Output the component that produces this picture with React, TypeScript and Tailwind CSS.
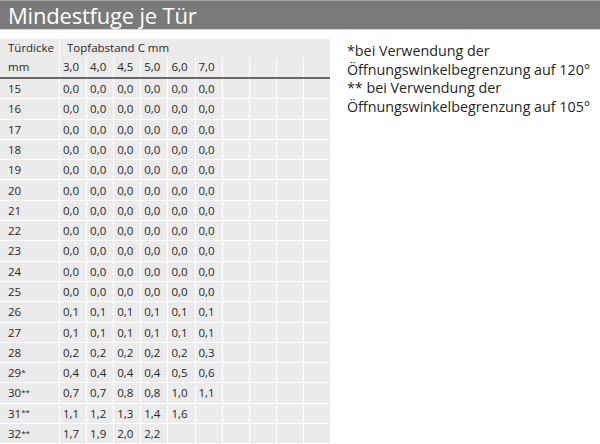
const cols = ["3,0", "4,0", "4,5", "5,0", "6,0", "7,0", "", "", "", ""];

const rows: [string, string[]][] = [
  ["15", ["0,0", "0,0", "0,0", "0,0", "0,0", "0,0"]],
  ["16", ["0,0", "0,0", "0,0", "0,0", "0,0", "0,0"]],
  ["17", ["0,0", "0,0", "0,0", "0,0", "0,0", "0,0"]],
  ["18", ["0,0", "0,0", "0,0", "0,0", "0,0", "0,0"]],
  ["19", ["0,0", "0,0", "0,0", "0,0", "0,0", "0,0"]],
  ["20", ["0,0", "0,0", "0,0", "0,0", "0,0", "0,0"]],
  ["21", ["0,0", "0,0", "0,0", "0,0", "0,0", "0,0"]],
  ["22", ["0,0", "0,0", "0,0", "0,0", "0,0", "0,0"]],
  ["23", ["0,0", "0,0", "0,0", "0,0", "0,0", "0,0"]],
  ["24", ["0,0", "0,0", "0,0", "0,0", "0,0", "0,0"]],
  ["25", ["0,0", "0,0", "0,0", "0,0", "0,0", "0,0"]],
  ["26", ["0,1", "0,1", "0,1", "0,1", "0,1", "0,1"]],
  ["27", ["0,1", "0,1", "0,1", "0,1", "0,1", "0,1"]],
  ["28", ["0,2", "0,2", "0,2", "0,2", "0,2", "0,3"]],
  ["29*", ["0,4", "0,4", "0,4", "0,4", "0,5", "0,6"]],
  ["30**", ["0,7", "0,7", "0,8", "0,8", "1,0", "1,1"]],
  ["31**", ["1,1", "1,2", "1,3", "1,4", "1,6"]],
  ["32**", ["1,7", "1,9", "2,0", "2,2"]],
];

const cell = "bg-[#ebebeb] flex items-center";

export default function App() {
  return (
    <div className="w-[600px] h-[444px] overflow-hidden bg-white text-[#262626] font-['Open_Sans',sans-serif]">
      <div className="h-[30px] bg-[#7a7a7a] border-t border-[#a5a5a5] border-b border-b-[#d6d6d6] flex items-center px-2">
        <h1 className="text-white text-[22px] leading-none tracking-[-0.2px]">Mindestfuge je Tür</h1>
      </div>

      <div className="flex mt-[9px]">
        <div className="w-[330px] shrink-0 bg-white text-[11.5px]">
          <div className="grid grid-cols-[59px_1fr] gap-x-px h-[18px]">
            <div className={cell + " pl-2"}>Türdicke</div>
            <div className={cell + " pl-[7px]"}>Topfabstand C mm</div>
          </div>
          <div className="grid grid-cols-[59px_repeat(10,1fr)] gap-x-px h-[20px]">
            <div className={cell + " pl-2"}>mm</div>
            {cols.map((c, i) => (
              <div key={i} className={cell + " pl-[3px]"}>
                {c}
              </div>
            ))}
          </div>
          <div className="h-[2px] bg-[#666666]" />
          <div className="flex flex-col gap-y-px">
            {rows.map(([d, vals]) => (
              <div key={d} className="grid grid-cols-[59px_repeat(10,1fr)] gap-x-px h-[19.3px]">
                <div className={cell + " pl-2"}>
                  {d.replace(/\*+$/, "")}
                  {d.includes("*") && (
                    <sup className="text-[8px] relative -top-[1px]">{d.match(/\*+$/)?.[0]}</sup>
                  )}
                </div>
                {Array.from({ length: 10 }).map((_, i) => (
                  <div key={i} className={cell + " pl-[3px]"}>
                    {vals[i] ?? ""}
                  </div>
                ))}
              </div>
            ))}
          </div>
        </div>

        <div className="ml-[17px] mt-[3px] text-[14.3px] leading-[18.7px] text-[#262626]">
          <div>*bei Verwendung der</div>
          <div>Öffnungswinkelbegrenzung auf 120°</div>
          <div>** bei Verwendung der</div>
          <div>Öffnungswinkelbegrenzung auf 105°</div>
        </div>
      </div>
    </div>
  );
}
